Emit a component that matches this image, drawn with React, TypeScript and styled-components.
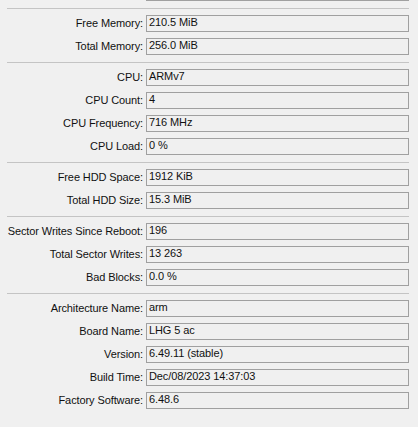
import React from 'react'
import styled, { createGlobalStyle } from 'styled-components'

type Row = { label: string; value: string }

const groups: Row[][] = [
  [
    { label: 'Free Memory:', value: '210.5 MiB' },
    { label: 'Total Memory:', value: '256.0 MiB' },
  ],
  [
    { label: 'CPU:', value: 'ARMv7' },
    { label: 'CPU Count:', value: '4' },
    { label: 'CPU Frequency:', value: '716 MHz' },
    { label: 'CPU Load:', value: '0 %' },
  ],
  [
    { label: 'Free HDD Space:', value: '1912 KiB' },
    { label: 'Total HDD Size:', value: '15.3 MiB' },
  ],
  [
    { label: 'Sector Writes Since Reboot:', value: '196' },
    { label: 'Total Sector Writes:', value: '13 263' },
    { label: 'Bad Blocks:', value: '0.0 %' },
  ],
  [
    { label: 'Architecture Name:', value: 'arm' },
    { label: 'Board Name:', value: 'LHG 5 ac' },
    { label: 'Version:', value: '6.49.11 (stable)' },
    { label: 'Build Time:', value: 'Dec/08/2023 14:37:03' },
    { label: 'Factory Software:', value: '6.48.6' },
  ],
]

const GlobalStyle = createGlobalStyle`
  html, body {
    margin: 0;
    padding: 0;
    background: #f0f0f0;
    overflow: hidden;
  }
  body {
    font-family: "Liberation Sans", Arial, sans-serif;
    font-size: 11px;
    color: #000;
  }
`

// the panel is scrolled: the field above the first separator shows only its bottom edge
const Panel = styled.div`
  display: flex;
  flex-direction: column;
  margin-top: -22px;
`

const Group = styled.div`
  display: flex;
  flex-direction: column;
  gap: 6px;
  padding: 6px 0 7px;
`

const Separator = styled.div`
  height: 1px;
  margin: 0 9px 0 7px;
  background: #c4c4c4;
`

const FieldRow = styled.div`
  display: grid;
  grid-template-columns: 143px 1fr;
  column-gap: 3px;
  align-items: center;
  margin-right: 9px;
`

const Label = styled.div`
  text-align: right;
  white-space: nowrap;
  line-height: 17px;
  letter-spacing: -0.1px;
  color: #101010;
`

const Value = styled.div`
  box-sizing: border-box;
  height: 17px;
  padding: 0 2px 2px;
  border: 1px solid #a0a0a0;
  background: #f0f0f0;
  line-height: 13px;
  white-space: nowrap;
  overflow: hidden;
  letter-spacing: -0.1px;
  color: #101010;
`

export default function App() {
  return (
    <>
      <GlobalStyle />
      <Panel>
        <Group>
          <FieldRow>
            <Label />
            <Value />
          </FieldRow>
        </Group>
        {groups.map((rows, i) => (
          <React.Fragment key={i}>
            <Separator />
            <Group>
              {rows.map(row => (
                <FieldRow key={row.label}>
                  <Label>{row.label}</Label>
                  <Value>{row.value}</Value>
                </FieldRow>
              ))}
            </Group>
          </React.Fragment>
        ))}
      </Panel>
    </>
  )
}
